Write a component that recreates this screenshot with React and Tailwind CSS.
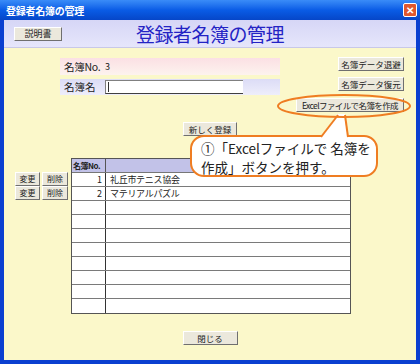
import React from "react";

const font = { fontFamily: '"Noto Sans CJK JP", "Noto Sans", sans-serif' };

function Btn({ children, className = "" }) {
  return (
    <div
      className={
        "flex items-center justify-center h-[14px] whitespace-nowrap overflow-hidden bg-[#ebe8dc] border-t border-l border-t-[#ffffff] border-l-[#ffffff] border-r border-b border-r-[#6f6f6f] border-b-[#6f6f6f] leading-none text-[#222] " +
        className
      }
    >
      {children}
    </div>
  );
}

const rows = [
  { no: "1", name: "礼丘市テニス協会" },
  { no: "2", name: "マテリアルパズル" },
  ...Array.from({ length: 8 }, () => ({ no: "", name: "" })),
];

export default function App() {
  return (
    <div className="w-[420px] h-[364px] flex flex-col bg-[#0a3fd0]" style={font}>
      {/* タイトルバー */}
      <div className="h-[20px] flex items-center justify-between pl-[6px] pr-[3px] bg-gradient-to-b from-[#3a8cf8] via-[#0a5ce6] to-[#0646c8]">
        <span className="text-[10px] font-bold text-white tracking-tight">登録者名簿の管理</span>
        <div className="w-[14px] h-[14px] rounded-[2px] bg-[#e0582e] border border-white flex items-center justify-center text-white text-[10px] font-bold leading-none">
          ✕
        </div>
      </div>

      <div className="flex-1 flex flex-col mx-[4px] mb-[4px]">
        {/* ヘッダー */}
        <div className="h-[28px] grid grid-cols-[1fr_auto_1fr] items-center bg-gradient-to-b from-[#d6d6f6] to-[#e6e6fb] border-b border-[#c8c8e8]">
          <div className="pl-[10px]">
            <Btn className="w-[48px] text-[9px]">説明書</Btn>
          </div>
          <h1 className="text-[19px] leading-none text-[#2323c4] tracking-[-0.5px]">登録者名簿の管理</h1>
          <div />
        </div>

        {/* 本体 */}
        <div className="relative flex-1 flex flex-col bg-[#fbf8ca]">
          <div className="flex justify-between">
            <div className="pl-[56px] pt-[10px]">
              <div className="w-[220px] h-[17px] flex items-center whitespace-nowrap bg-gradient-to-b from-[#fbe0e4] to-[#fdf3ee] text-[10.5px] text-[#222]">
                <span className="w-[45px] pl-[4px] tracking-tight">名簿No.</span>
                <span className="text-[9px]">3</span>
              </div>
              <div className="mt-[4px] w-[220px] h-[16px] flex items-center whitespace-nowrap bg-gradient-to-b from-[#dcdcf6] to-[#eeeefb] text-[10.5px] text-[#222]">
                <span className="w-[45px] pl-[4px]">名簿名</span>
                <div className="w-[138px] h-[14px] bg-white border-t border-l border-[#808080] border-b border-b-[#404040] flex items-center pl-[2px]">
                  <span className="w-px h-[10px] bg-[#333]" />
                </div>
              </div>
            </div>
            <div className="pr-[12px] pt-[9px] flex flex-col items-end text-[8.5px]">
              <Btn className="w-[66px]">名簿データ退避</Btn>
              <Btn className="w-[66px] mt-[6px]">名簿データ復元</Btn>
              <Btn className="w-[108px] mt-[7px] tracking-[-0.6px]">Excelファイルで名簿を作成</Btn>
            </div>
          </div>

          <div className="flex justify-center mt-[10px]">
            <Btn className="w-[54px] text-[8.5px]">新しく登録</Btn>
          </div>

          {/* 一覧 */}
          <div className="flex mt-[22px] pl-[11px]">
            <div className="w-[56px] pt-[14px] flex flex-col">
              {rows.slice(0, 2).map((r) => (
                <div key={r.no} className="flex gap-[2px] h-[14px]">
                  <Btn className="w-[25px] h-[13px] text-[8px]">変更</Btn>
                  <Btn className="w-[26px] h-[13px] text-[8px]">削除</Btn>
                </div>
              ))}
            </div>
            <div className="w-[280px] border border-[#555] text-[9px] text-[#222] whitespace-nowrap">
              <div className="flex h-[14px] bg-[#c2c2e8] border-b border-[#777]">
                <div className="w-[34px] border-r border-[#555] flex items-center pl-[1px] font-bold tracking-[-0.5px] text-[8px]">名簿No.</div>
                <div className="flex-1" />
              </div>
              {rows.map((r, i) => (
                <div key={i} className="flex h-[14px] bg-white border-b border-[#7a7a7a] last:border-b-0">
                  <div className="w-[34px] border-r border-[#333] flex items-center justify-end pr-[3px]">{r.no}</div>
                  <div className="flex-1 flex items-center pl-[4px] tracking-[-0.3px]">{r.name}</div>
                </div>
              ))}
            </div>
          </div>

          <div className="flex justify-center mt-[17px]">
            <Btn className="w-[55px] text-[8.5px]">閉じる</Btn>
          </div>

          {/* 吹き出し */}
          <div className="absolute left-[186px] top-[87px] w-[188px] h-[42px] rounded-[14px] border-2 border-[#ef7d22] bg-white pl-[9px] pt-[2px] text-[13.5px] leading-[19px] text-[#222] whitespace-nowrap">
            <div>①「Excelファイルで 名簿を</div>
            <div>作成」ボタンを押す。</div>
          </div>
          <svg className="absolute left-0 top-0 pointer-events-none" width="412" height="312">
            <polygon points="317,90 333,66 341,66 344,90" fill="#ffffff" />
            <polyline points="317,89 334,67" fill="none" stroke="#ef7d22" strokeWidth="2" />
            <polyline points="341,67 344,89" fill="none" stroke="#ef7d22" strokeWidth="2" />
            <ellipse cx="340" cy="58" rx="66" ry="11" fill="none" stroke="#ef7d22" strokeWidth="2" />
          </svg>
        </div>
      </div>
    </div>
  );
}
